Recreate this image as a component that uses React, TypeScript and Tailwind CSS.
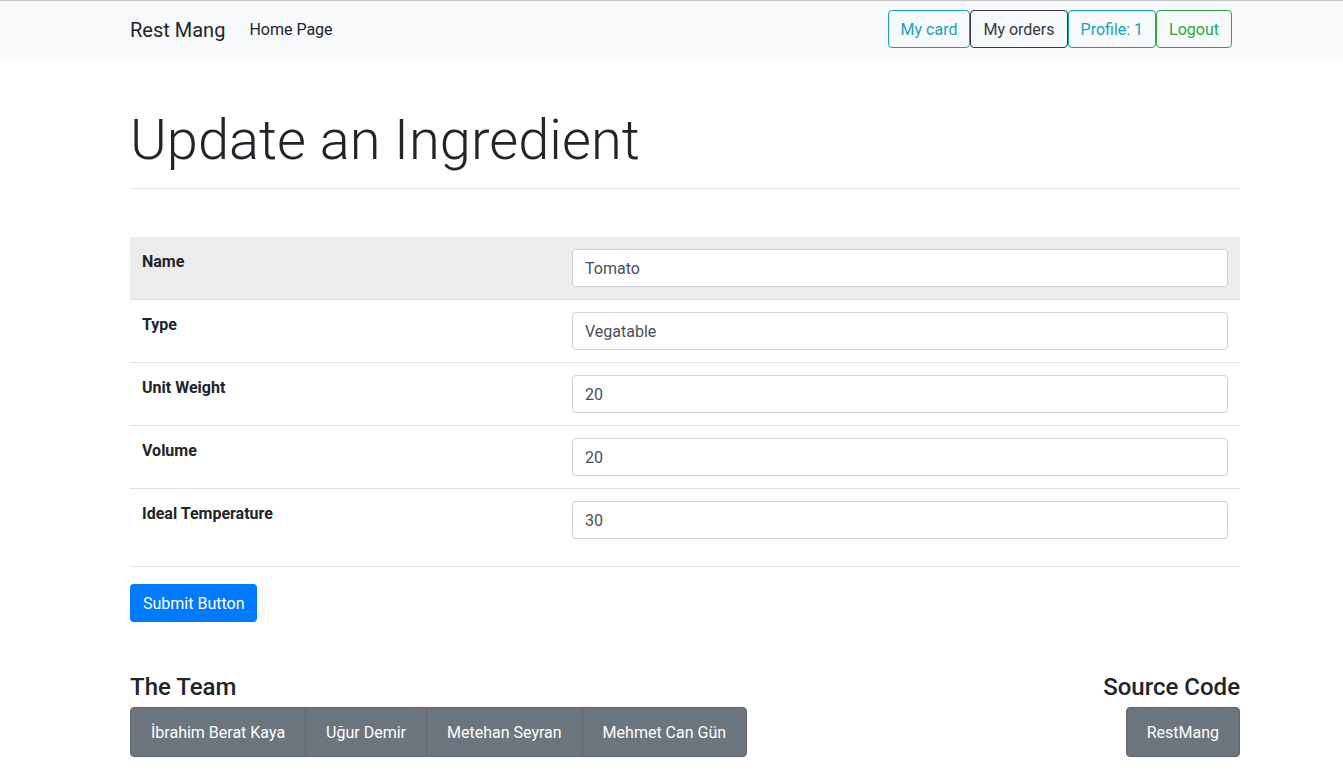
import React from "react";

const rows = [
  { label: "Name", value: "Tomato" },
  { label: "Type", value: "Vegatable" },
  { label: "Unit Weight", value: "20" },
  { label: "Volume", value: "20" },
  { label: "Ideal Temperature", value: "30" },
];

const team = ["İbrahim Berat Kaya", "Uğur Demir", "Metehan Seyran", "Mehmet Can Gün"];

export default function App() {
  return (
    <div className="min-h-screen bg-white text-[#212529] font-['Roboto',sans-serif] text-[16px] leading-[24px]">
      <div className="border-t border-[#c6c6c6] bg-[#f8f9fa]">
        <div className="w-[1110px] ml-[130px] h-[56px] flex items-center">
          <span className="text-[20px] leading-[30px] mr-4 pt-[2px]">Rest Mang</span>
          <span className="px-2 pt-[2px]">Home Page</span>
          <div className="ml-auto mr-2 flex">
            <button className="border border-[#17a2b8] text-[#17a2b8] rounded px-3 pt-[7px] pb-[5px] leading-[24px]">My card</button>
            <button className="border border-[#343a40] text-[#343a40] rounded px-3 pt-[7px] pb-[5px] leading-[24px]">My orders</button>
            <button className="border border-[#17a2b8] text-[#17a2b8] rounded px-3 pt-[7px] pb-[5px] leading-[24px]">Profile: 1</button>
            <button className="border border-[#28a745] text-[#28a745] rounded px-3 pt-[7px] pb-[5px] leading-[24px]">Logout</button>
          </div>
        </div>
      </div>

      <div className="w-[1110px] ml-[130px]">
        <h1 className="text-[56px] leading-[67px] font-light mt-[50px] mb-[14px]">Update an Ingredient</h1>
        <div className="border-t border-[#e6e6e6]"></div>

        <div className="mt-[48px]">
          {rows.map((r, i) => (
            <div
              key={r.label}
              className={`flex ${i > 0 ? "border-t border-[#dee2e6]" : ""} ${i === 0 ? "bg-[#ececec]" : ""}`}
            >
              <div className="w-[430px] h-[62px] px-3 pt-[13px] font-bold">{r.label}</div>
              <div className="flex-1 p-3">
                <div className="h-[38px] border border-[#ced4da] rounded bg-white px-3 pt-[7px] pb-[5px] text-[#495057]">
                  {r.value}
                </div>
              </div>
            </div>
          ))}
        </div>

        <div className="border-t border-[#e6e6e6] mt-[15px]"></div>

        <button className="mt-[17px] h-[38px] bg-[#007bff] text-white rounded pl-[13px] pr-3 pt-[8px] pb-[6px] leading-[24px]">Submit Button</button>

        <div className="flex justify-between mt-[49px]">
          <div>
            <h4 className="text-[24px] leading-[29px] font-medium pt-[2px] mb-[5px]">The Team</h4>
            <div className="flex">
              {team.map((n, i) => (
                <div
                  key={n}
                  className={`bg-[#6c757d] text-white px-5 pt-[13px] pb-[11px] border border-[#5f666d] ${i === 0 ? "rounded-l" : ""} ${i === team.length - 1 ? "rounded-r" : ""} ${i > 0 ? "-ml-px" : ""}`}
                >
                  {n}
                </div>
              ))}
            </div>
          </div>
          <div className="flex flex-col items-end">
            <h4 className="text-[24px] leading-[29px] font-medium pt-[2px] mb-[5px]">Source Code</h4>
            <div className="bg-[#6c757d] text-white px-5 pt-[13px] pb-[11px] border border-[#5f666d] rounded">RestMang</div>
          </div>
        </div>
      </div>
    </div>
  );
}
